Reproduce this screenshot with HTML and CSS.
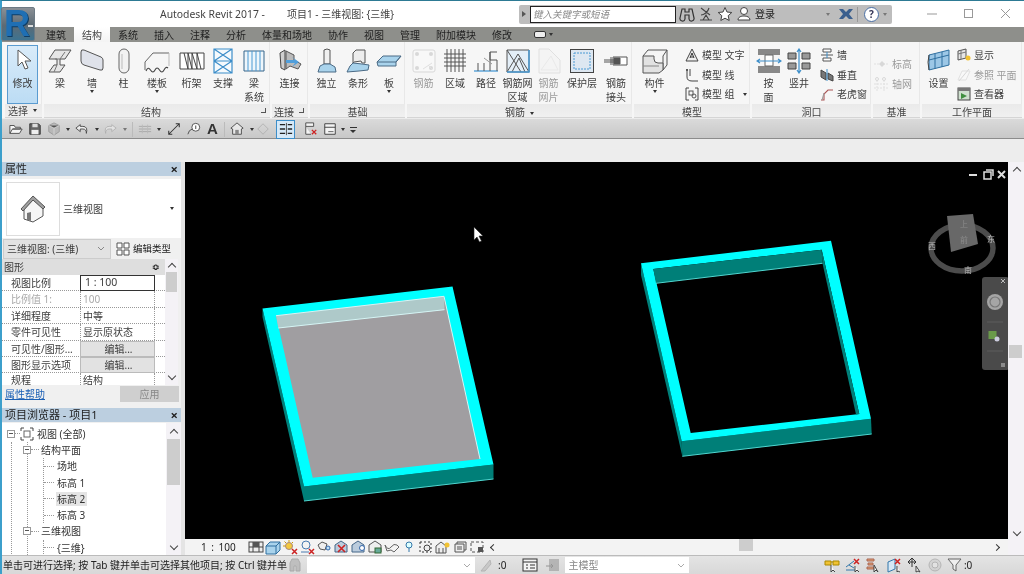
FILE: index.html
```html
<!DOCTYPE html>
<html lang="zh">
<head>
<meta charset="utf-8">
<title>Autodesk Revit 2017</title>
<link rel="stylesheet" href="styles.css">
</head>
<body>
<div class="app">
  <div class="appbtn"><span class="r">R</span><span class="appdrop"></span></div>

  <header class="titlebar">
    <span class="t1">Autodesk Revit 2017 -</span>
    <span class="t2">项目1 - 三维视图: {三维}</span>
    <div class="infobar">
      <span class="tri-r"></span>
      <div class="search">键入关键字或短语</div>
      <svg class="s16 m-a" viewBox="0 0 16 16"><path d="M3 3h3v3h4V3h3l2 9a2.500 2.500 0 0 1-5 1V9H6v4a2.500 2.500 0 0 1-5-1z" fill="none" stroke="#333" stroke-width="1.200"/></svg>
      <svg class="s16 m-b" viewBox="0 0 16 16"><path d="M3 2l9 7M3 9c3 0 7-3 8-7M2 14h12M5 14l3-5 3 5" fill="none" stroke="#444" stroke-width="1.100"/></svg>
      <svg class="s16 m-b" viewBox="0 0 16 16"><path d="M8 1.500l2 4.500 4.800.5-3.600 3.200 1 4.800L8 12.200 3.800 14.500l1-4.800L1.200 6.500 6 6z" fill="#fff" stroke="#444"/></svg>
      <svg class="s16 m-b" viewBox="0 0 16 16"><circle cx="8" cy="5" r="3.500" fill="#fff" stroke="#444"/><path d="M2 14c0-3 3-4 6-4s6 1 6 4z" fill="#fff" stroke="#444"/></svg>
      <span class="login">登录</span>
      <span class="drop m-c"></span>
      <svg class="s16 m-d" viewBox="0 0 16 16"><path d="M1 3h4l3 3 3-3h4l-4 5 4 5h-4L8 10l-3 3H1l4-5z" fill="#3a5f8e"/></svg>
      <span class="sep"></span>
      <span class="help">?</span>
      <span class="drop m-e"></span>
    </div>
    <div class="winctl">
      <span class="wc"><svg class="s12" viewBox="0 0 12 12"><path d="M1 6h10" stroke="#999"/></svg></span>
      <span class="wc"><svg class="s12" viewBox="0 0 12 12"><rect x="1.500" y="1.500" width="8" height="8" fill="none" stroke="#999"/></svg></span>
      <span class="wc"><svg class="s12" viewBox="0 0 12 12"><path d="M1 1l9 9M10 1l-9 9" stroke="#999"/></svg></span>
    </div>
  </header>

  <nav class="tabs">
    <span class="tab">建筑</span><span class="tab active">结构</span><span class="tab">系统</span><span class="tab">插入</span><span class="tab">注释</span><span class="tab">分析</span><span class="tab">体量和场地</span><span class="tab">协作</span><span class="tab">视图</span><span class="tab">管理</span><span class="tab">附加模块</span><span class="tab">修改</span>
    <span class="tabctl"><span class="tabpill"></span><span class="drop dark"></span></span>
  </nav>

  <section class="ribbon">
    <div class="panel p-sel">
      <div class="pbody">
        <div class="btn selected">
          <svg class="ico" viewBox="0 0 26 26"><path d="M8 2v16l4-4 3 7 3-1-3-7h6z" fill="#fff" stroke="#555"/></svg>
          <span class="lb">修改</span>
        </div>
      </div>
      <div class="ptitle between">选择<span class="drop dark"></span></div>
    </div>

    <div class="panel p-str">
      <div class="pbody cols c-str">
        <div class="btn"><svg class="ico" viewBox="0 0 26 26"><path d="M2 11l6-9h16l-6 9h-5v6h5l-5 7H2l5-7h3v-6z" fill="#e6e6e6" stroke="#555"/><path d="M8 11h5M13 11l5-7M10 17l-3 7" fill="none" stroke="#777"/></svg><span class="lb">梁</span></div>
        <div class="btn"><svg class="ico" viewBox="0 0 26 26"><path d="M2 4q0-3 3-2l17 7q2 1 2 3v8q0 3-3 2L5 17q-3-1-3-4z" fill="#dfe2ea" stroke="#555"/></svg><span class="lb">墙</span><span class="drop dark big"></span></div>
        <div class="btn"><svg class="ico" viewBox="0 0 26 26"><rect x="8" y="1" width="10" height="24" rx="5" fill="#f2f2f2" stroke="#666"/><path d="M11 6v15" stroke="#bbb"/></svg><span class="lb">柱</span></div>
        <div class="btn"><svg class="ico" viewBox="0 0 26 26"><path d="M1 22v-8L9 5h16" fill="none" stroke="#666"/><path d="M25 5v13" stroke="#bbb"/><path d="M2 23q2-5 4.500-1t4.500 0 4.500 0 4.500 0 4-2" fill="none" stroke="#444" stroke-width="1.100"/></svg><span class="lb">楼板</span><span class="drop dark big"></span></div>
        <div class="btn"><svg class="ico" viewBox="0 0 26 26"><path d="M1 5h24v16H1zM5 5l4 16V5l4 16V5l5 16V5l4 16" fill="#fff" stroke="#444"/></svg><span class="lb">桁架</span></div>
        <div class="btn"><svg class="ico" viewBox="0 0 26 26"><path d="M4 1h18v24H4zM4 13h18M4 1l18 12M22 1L4 13M4 13l18 12M22 13L4 25" fill="#f5fafd" stroke="#3d8ec9" stroke-width="1.200"/></svg><span class="lb">支撑</span></div>
        <div class="btn"><svg class="ico" viewBox="0 0 26 26"><path d="M3 3h20v20H3z" fill="#eef6fb" stroke="#35658a"/><path d="M7 3v20M11 3v20M15 3v20M19 3v20" stroke="#4a9ad4"/></svg><span class="lb">梁<br>系统</span></div>
      </div>
      <div class="ptitle corner">结构</div>
    </div>

    <div class="panel p-con">
      <div class="pbody">
        <div class="btn"><svg class="ico" viewBox="0 0 26 26"><path d="M3 5l5-3v20l-4-2z" fill="#cfcfcf" stroke="#444"/><path d="M9 3l8 4v5l7 4-3 5-8-3-4 3z" fill="#bbb" stroke="#555"/><path d="M9 12h9l-3-3 7 5-7 5 3-4H9z" fill="#4f9edb"/></svg><span class="lb">连接</span></div>
      </div>
      <div class="ptitle corner">连接</div>
    </div>

    <div class="panel p-fnd">
      <div class="pbody cols c-fnd">
        <div class="btn"><svg class="ico" viewBox="0 0 26 26"><path d="M10 2q3-2 6 0v14h-6z" fill="#f0f0f0" stroke="#555"/><path d="M4 24l2-6 4-2h6l5 3 1 5z" fill="#a9d3ec" stroke="#4a6a85"/></svg><span class="lb">独立</span></div>
        <div class="btn"><svg class="ico" viewBox="0 0 26 26"><path d="M8 15V5l3-3h9v13h-3l-1-2-7 1z" fill="#ededed" stroke="#555"/><path d="M2 24l3-6 3-3 9 1 7 1-1 5-9 1z" fill="#a9d3ec" stroke="#4a6a85"/></svg><span class="lb">条形</span></div>
        <div class="btn"><svg class="ico" viewBox="0 0 26 26"><path d="M1 14l6-6h18l-5 6v4H2z" fill="#a9d3ec" stroke="#4a6a85"/><path d="M1 14h19l5-6" fill="none" stroke="#4a6a85"/></svg><span class="lb">板</span><span class="drop dark big"></span></div>
      </div>
      <div class="ptitle">基础</div>
    </div>

    <div class="panel p-reb">
      <div class="pbody cols c-reb">
        <div class="btn off"><svg class="ico" viewBox="0 0 26 26"><rect x="2" y="2" width="22" height="22" rx="2" fill="#fafafa" stroke="#bbb"/><circle cx="6" cy="6" r="2" fill="#bbb"/><circle cx="20" cy="6" r="2" fill="#bbb"/><circle cx="6" cy="20" r="2" fill="#bbb"/><circle cx="20" cy="20" r="2" fill="#bbb"/><path d="M12 21l9-6M21 21l-4-4" stroke="#ccc"/></svg><span class="lb">钢筋</span></div>
        <div class="btn"><svg class="ico" viewBox="0 0 26 26"><path d="M2 6h22M2 10h22M2 14h22M2 18h22M5 1v23M9 1v23M13 1v23M17 1v23M21 1v23" stroke="#555"/></svg><span class="lb">区域</span></div>
        <div class="btn"><svg class="ico" viewBox="0 0 26 26"><path d="M1 23h24" stroke="#4a9ad4" stroke-width="1.300"/><path d="M5 23v-8M11 23v-8M17 23V4M24 4h-7v8h7v11" fill="none" stroke="#555"/><path d="M19 16l-8-6" stroke="#999"/></svg><span class="lb">路径</span></div>
        <div class="btn"><svg class="ico" viewBox="0 0 26 26"><path d="M2 2h22v22H2z" fill="#e4eff8" stroke="#555"/><path d="M2 24L13 6l11 18M7 24l7-14 6 14M2 2l14 22" fill="none" stroke="#555"/><path d="M2 24h22V2" fill="none" stroke="#4a9ad4" stroke-width="1.500"/></svg><span class="lb">钢筋网<br>区域</span></div>
        <div class="btn off"><svg class="ico" viewBox="0 0 26 26"><path d="M3 1h10l11 11v13H3z" fill="#f4f4f4" stroke="#ccc"/><path d="M5 22L15 8l7 14z" fill="none" stroke="#ddd"/></svg><span class="lb">钢筋<br>网片</span></div>
        <div class="btn"><svg class="ico" viewBox="0 0 26 26"><rect x="1.500" y="1.500" width="23" height="23" fill="#dde7f1" stroke="#444"/><rect x="5" y="5" width="16" height="16" fill="none" stroke="#4a9ad4" stroke-dasharray="2 1"/></svg><span class="lb">保护层</span></div>
        <div class="btn"><svg class="ico" viewBox="0 0 26 26"><path d="M10 9h14v8H10z" fill="#fff" stroke="#555"/><path d="M1 12h16M1 14h16M8 9v8M11 10h6v6h-6z" fill="#555" stroke="#555"/></svg><span class="lb">钢筋<br>接头</span></div>
      </div>
      <div class="ptitle">钢筋<span class="drop dark inl"></span></div>
    </div>

    <div class="panel p-mod">
      <div class="pbody cols c-mod">
        <div class="btn"><svg class="ico" viewBox="0 0 26 26"><path d="M1 8l5-6h19l-4 6v14l4-5V2" fill="#f4f4f4" stroke="#555"/><path d="M1 8h11v3q0 4 4 4h5v7l-4 3H1z" fill="#e2e2e2" stroke="#555"/><path d="M1 18h16" stroke="#888"/></svg><span class="lb">构件</span><span class="drop dark big"></span></div>
        <div class="stack wide">
          <div class="sm"><svg class="s14" viewBox="0 0 14 14"><path d="M7 1l6 12H1z" fill="#eee" stroke="#444"/><path d="M5 10l2-5 2 5M5.500 9h3" fill="none" stroke="#333"/></svg><span>模型 文字</span></div>
          <div class="sm"><svg class="s14" viewBox="0 0 14 14"><path d="M2 1v8q0 4 5 4h6M5 1v7" fill="none" stroke="#444"/><circle cx="2" cy="2" r="1" fill="#444"/></svg><span>模型 线</span></div>
          <div class="sm"><svg class="s14" viewBox="0 0 14 14"><path d="M4 1H1v12h3M10 1h3v12h-3" fill="none" stroke="#444"/><rect x="4" y="4" width="4" height="4" fill="none" stroke="#555"/><circle cx="9" cy="9" r="2" fill="none" stroke="#555"/></svg><span>模型 组</span><span class="drop dark inl"></span></div>
        </div>
      </div>
      <div class="ptitle">模型</div>
    </div>

    <div class="panel p-opn">
      <div class="pbody cols c-opn">
        <div class="btn"><svg class="ico" viewBox="0 0 26 26"><rect x="2" y="1" width="22" height="6" fill="#888"/><rect x="2" y="18" width="22" height="7" fill="#888"/><path d="M9 7h8v11H9z" fill="#fff" stroke="#666"/><path d="M1 13h24M4 11l-3 2 3 2M22 11l3 2-3 2" fill="none" stroke="#3d8ec9" stroke-width="1.200"/></svg><span class="lb">按<br>面</span></div>
        <div class="btn"><svg class="ico" viewBox="0 0 26 26"><path d="M2 5h8v6H2zM16 5h8v6h-8zM2 15h8v6H2zM16 15h8v6h-8z" fill="#999" stroke="#444"/><path d="M13 1v24M11 4l2-3 2 3M11 22l2 3 2-3" fill="none" stroke="#3d8ec9" stroke-width="1.200"/></svg><span class="lb">竖井</span></div>
        <div class="stack opn">
          <div class="sm"><svg class="s14" viewBox="0 0 14 14"><path d="M3 1h8v3H3zM3 10h8v3H3zM1 7h12" fill="#fff" stroke="#555"/><path d="M7 4v6" stroke="#3d8ec9"/></svg><span>墙</span></div>
          <div class="sm"><svg class="s14" viewBox="0 0 14 14"><path d="M1 2l5 3v7L1 9zM8 5l5 3v5l-5-2z" fill="#777" stroke="#444"/><path d="M7 1v12" stroke="#3d8ec9"/></svg><span>垂直</span></div>
          <div class="sm"><svg class="s14" viewBox="0 0 14 14"><path d="M1 13h3V7l4-4h5" fill="none" stroke="#a55" stroke-width="1.100"/><path d="M2 13L4 6" stroke="#999"/></svg><span>老虎窗</span></div>
        </div>
      </div>
      <div class="ptitle">洞口</div>
    </div>

    <div class="panel p-dat">
      <div class="pbody">
        <div class="stack mid off">
          <div class="sm"><svg class="s16" viewBox="0 0 16 14"><path d="M1 7h14" stroke="#ccc" stroke-dasharray="2 1"/><path d="M9 4l3 3-3 3-3-3z" fill="#bbb"/></svg><span>标高</span></div>
          <div class="sm"><svg class="s16" viewBox="0 0 16 14"><path d="M4 3v11M11 3v11M1 7h14M1 11h14" stroke="#ccc" stroke-dasharray="2 1"/><circle cx="4" cy="2" r="1.500" fill="none" stroke="#bbb"/><circle cx="11" cy="2" r="1.500" fill="none" stroke="#bbb"/></svg><span>轴网</span></div>
        </div>
      </div>
      <div class="ptitle">基准</div>
    </div>

    <div class="panel p-wrk">
      <div class="pbody cols c-wrk">
        <div class="btn"><svg class="ico" viewBox="0 0 26 26"><path d="M3 7l20-5v15L3 22z" fill="#9cc7e6" stroke="#2f6f9f"/><path d="M9 6v15M16 4v15M3 12l20-5" stroke="#2f6f9f"/><path d="M3 7q-2 7 0 15" fill="none" stroke="#444"/></svg><span class="lb">设置</span></div>
        <div class="stack tools">
          <div class="sm"><svg class="s14" viewBox="0 0 14 14"><path d="M1 3l8-2v9l-8 2z" fill="#e6e6e6" stroke="#555"/><path d="M4 2v9M1 6l8-2" stroke="#777"/><circle cx="11" cy="10" r="2.500" fill="#f1c232"/></svg><span>显示</span></div>
          <div class="sm off"><svg class="s14" viewBox="0 0 14 14"><path d="M1 12L5 3h8l-4 9z" fill="#fafafa" stroke="#ccc"/><path d="M2 13L12 1" stroke="#bbb"/></svg><span>参照 平面</span></div>
          <div class="sm"><svg class="s14" viewBox="0 0 14 14"><rect x="1" y="1" width="12" height="12" fill="#cfe0cf" stroke="#444"/><path d="M1 1h12v3H1z" fill="#777"/><path d="M4 6l6 3-6 3z" fill="#3f8f3f"/></svg><span>查看器</span></div>
        </div>
      </div>
      <div class="ptitle">工作平面</div>
    </div>
  </section>

  <div class="qat">
    <svg class="q" viewBox="0 0 16 16"><path d="M1 13V4h5l1 2h6v2H4l-3 5h11l3-5H4" fill="#f5f5f5" stroke="#444"/></svg>
    <svg class="q" viewBox="0 0 16 16"><path d="M2 2h10l2 2v10H2z" fill="#666" stroke="#333"/><rect x="5" y="2" width="6" height="4" fill="#ddd"/><rect x="4" y="9" width="8" height="5" fill="#eee"/></svg>
    <svg class="q faint" viewBox="0 0 16 16"><path d="M8 1l6 3v7l-6 4-6-4V4z" fill="#aaa" stroke="#777"/><path d="M2 4l6 3 6-3M8 7v8" stroke="#ddd"/></svg>
    <span class="drop dark"></span>
    <svg class="q" viewBox="0 0 16 16"><path d="M6 3L1 7l5 4V8h3q4 0 4 5 2-8-4-8H6z" fill="#eee" stroke="#444"/></svg>
    <span class="drop dark g6"></span>
    <svg class="q faint g4" viewBox="0 0 16 16"><path d="M10 3l5 4-5 4V8H7q-4 0-4 5-2-8 4-8h3z" fill="#eee" stroke="#999"/></svg>
    <span class="drop g6"></span>
    <span class="qsep"></span>
    <svg class="q faint" viewBox="0 0 16 16"><path d="M1 5h14M1 11h14M1 8h14" stroke="#888"/><path d="M5 3v10M11 3v10" stroke="#aaa"/></svg>
    <span class="drop dark"></span>
    <svg class="q g6" viewBox="0 0 16 16"><path d="M2 14L14 2M10 2h4v4M2 10v4h4" fill="none" stroke="#333" stroke-width="1.200"/></svg>
    <svg class="q g6" viewBox="0 0 16 16"><path d="M1 14q1-5 5-6" fill="none" stroke="#444"/><circle cx="10" cy="6" r="4.500" fill="#fff" stroke="#444"/><path d="M10 4v4" stroke="#333"/></svg>
    <span class="qa g6">A</span>
    <span class="qsep g3"></span>
    <svg class="q" viewBox="0 0 16 16"><path d="M8 1l7 6-2 1v6H3V8L1 7z" fill="#e8e8e8" stroke="#444"/><path d="M6 14V9h4v5" fill="#888"/></svg>
    <span class="drop dark g6"></span>
    <svg class="q faint g2" viewBox="0 0 16 16"><path d="M8 2l6 6-6 6-6-6z" fill="none" stroke="#999"/></svg>
    <span class="qactive g6"><svg class="q" viewBox="0 0 16 16"><path d="M1 3h6M1 8h6M1 13h6M10 3h5M10 8h5M10 13h5" stroke="#222" stroke-width="1.600"/><path d="M8.500 1v14" stroke="#444"/></svg></span>
    <svg class="q g9" viewBox="0 0 16 16"><path d="M2 1h9v4H2zM2 5v9h6" fill="#f4f4f4" stroke="#444"/><path d="M9 9l5 5M14 9l-5 5" stroke="#c22" stroke-width="1.500"/></svg>
    <svg class="q" viewBox="0 0 16 16"><path d="M2 2h12v12H2z" fill="#f4f4f4" stroke="#333"/><path d="M2 6h12" stroke="#333"/><path d="M6 11h6" stroke="#555"/></svg>
    <span class="drop dark g4"></span>
    <span class="qmenu"></span>
  </div>

  <div class="options"></div>

  <main class="main">
    <aside class="left">
      <div class="ptl"><span>属性</span><span class="x">×</span></div>
      <div class="typesel">
        <div class="thumb">
          <svg class="house" viewBox="0 0 28 28"><path d="M5 14v10l9 3 10-6V12L14 5z" fill="#f6f6f6" stroke="#555"/><path d="M2 14L14 1l12 11-2 2L14 5 4 16z" fill="#a0a0a0" stroke="#555"/><path d="M8 25v-7l4-1v9z" fill="#777"/></svg>
        </div>
        <span class="tname">三维视图</span>
        <span class="drop dark"></span>
      </div>
      <div class="comborow">
        <div class="combo"><span>三维视图: (三维)</span><svg class="chev" viewBox="0 0 8 5"><path d="M1 1l3 3 3-3" fill="none" stroke="#888"/></svg></div>
        <div class="edittype"><svg class="s14" viewBox="0 0 14 14"><path d="M1 1h5v5H1zM8 1h5v5H8zM1 8h5v5H1zM8 8h5v5H8z" fill="#fff" stroke="#555"/></svg><span>编辑类型</span></div>
      </div>
      <div class="propwrap">
        <div class="props">
          <div class="phead"><span>图形</span><span class="collapse">≎</span></div>
          <div class="rows">
            <div class="pr"><span>视图比例</span><span class="val boxed">1 : 100</span></div>
            <div class="pr dim"><span>比例值 1:</span><span class="val">100</span></div>
            <div class="pr"><span>详细程度</span><span class="val">中等</span></div>
            <div class="pr"><span>零件可见性</span><span class="val">显示原状态</span></div>
            <div class="pr"><span>可见性/图形...</span><span class="val ebtn">编辑...</span></div>
            <div class="pr"><span>图形显示选项</span><span class="val ebtn">编辑...</span></div>
            <div class="pr last"><span>规程</span><span class="val">结构</span></div>
          </div>
        </div>
        <div class="sb sb-props"><span class="up"></span><span class="thumbbar"></span><span class="dn"></span></div>
      </div>
      <div class="pfoot"><a class="helplink">属性帮助</a><span class="apply">应用</span></div>

      <div class="ptl second"><span>项目浏览器 - 项目1</span><span class="x">×</span></div>
      <div class="browser">
        <div class="tree">
          <div class="row"><span class="tg"></span><span class="dash d1"></span><svg class="s14" viewBox="0 0 14 14"><path d="M1 4V1h3M10 1h3v3M13 10v3h-3M4 13H1v-3" fill="none" stroke="#444"/><rect x="4" y="4" width="6" height="6" fill="none" stroke="#666"/></svg><span class="tx first">视图 (全部)</span></div>
          <ul class="l1">
            <li>
              <div class="row"><span class="pad"></span><span class="tg"></span><span class="dash d2"></span><span class="tx lv1">结构平面</span></div>
              <ul class="l2">
                <li class="row"><span class="dash d3"></span><span class="tx">场地</span></li>
                <li class="row"><span class="dash d3"></span><span class="tx">标高 1</span></li>
                <li class="row"><span class="dash d3"></span><span class="tx hl">标高 2</span></li>
                <li class="row"><span class="dash d3"></span><span class="tx">标高 3</span></li>
              </ul>
            </li>
            <li>
              <div class="row"><span class="pad"></span><span class="tg"></span><span class="dash d2"></span><span class="tx lv1">三维视图</span></div>
              <ul class="l2">
                <li class="row"><span class="dash d3"></span><span class="tx">{三维}</span></li>
              </ul>
            </li>
          </ul>
        </div>
        <div class="sb sb-tree"><span class="up"></span><span class="thumbbar"></span><span class="dn"></span></div>
      </div>
    </aside>

    <div class="viewcol">
      <div class="canvas">
        <svg class="scene" viewBox="185 163 823 377">
          <!-- left slab -->
          <polygon points="262.500,309.500 304,487.500 304,502 262.500,318" fill="#00807a"/>
          <polygon points="304,487.500 493.500,465.500 493.500,480 304,502" fill="#007f78"/>
          <path d="M304 502L493.500 480" stroke="#4fd6d0"/>
          <polygon points="262.500,309.500 452.500,287.500 493.500,465.500 304,487.500" fill="#00ffff"/>
          <polygon points="276,316.700 444,297.300 480,460 312.700,478.700" fill="#a09ea1"/>
          <polygon points="276,316.700 444,297.300 444.500,310.700 278.300,329" fill="#aec9c9"/>
          <path d="M276 316.700L444 297.300M278.300 329L444.500 310.700M444 297.300L480 460" stroke="#d5f5f5" stroke-width="1" fill="none"/>
          <!-- right ring -->
          <polygon points="641,264.300 681.700,442.300 682.300,457.300 641,276" fill="#00807a"/>
          <polygon points="681.700,442.300 871,419.700 871.700,435 682.300,457.300" fill="#007f78"/>
          <path d="M682.300 457.300L871.700 435" stroke="#4fd6d0"/>
          <path fill-rule="evenodd" d="M641 264.300L831 241.700L871 419.700L681.700 442.300ZM653.300 270L690.700 434L859.300 415L821.700 250.700Z" fill="#00ffff"/>
          <polygon points="653.300,270 821.700,250.700 822.500,264.300 656,284.300" fill="#007f78"/>
          <polygon points="821.700,250.700 859.300,415 856,415.500 822.500,264.300" fill="#00807a"/>
          <path d="M656 284.300L822.500 264.300" stroke="#4fd6d0"/>
          <!-- cursor -->
          <path d="M474 228v13l3-3 2.500 5 2-1-2.500-5h4z" fill="#fff" stroke="#222" stroke-width=".6"/>
          <!-- view cube -->
          <ellipse cx="962" cy="249" rx="31" ry="23" fill="none" stroke="#4c4c4c" stroke-width="5.500"/>
          <polygon points="947,217 973,215 978,245 951,253" fill="#686868"/>
          <text class="cubetx dimtx" x="964" y="228">上</text>
          <text class="cubetx dimtx" x="964" y="244">前</text>
          <text class="cubetx" x="932" y="250">西</text>
          <text class="cubetx" x="991" y="243">东</text>
          <text class="cubetx" x="968" y="274">南</text>
          <!-- window controls -->
          <path d="M969 176h8" stroke="#ddd" stroke-width="2"/>
          <path d="M984 173h7v7h-7z M986 171h7v6" fill="none" stroke="#ddd" stroke-width="1.500"/>
          <path d="M998 172l7 7M1005 172l-7 7" stroke="#ddd" stroke-width="2"/>
          <!-- nav bar -->
          <rect x="982" y="278" width="27" height="93" rx="3" fill="#4a4a4a"/>
          <path d="M1001 280l4 4M1005 280l-4 4" stroke="#bbb"/>
          <circle cx="995" cy="303" r="8" fill="#a5a5a5"/>
          <circle cx="995" cy="303" r="5" fill="none" stroke="#777" stroke-width="1.200"/>
          <path d="M987 323h16M987 352h16" stroke="#5c5c5c"/>
          <rect x="988.500" y="332" width="8" height="8" fill="#6a9a4a"/>
          <circle cx="997" cy="340" r="2.500" fill="#ccd"/>
          <path d="M1001 365h4M1001 367h4" stroke="#ccc"/>
        </svg>
      </div>
      <div class="viewbar">
        <span class="scale">1 : 100</span>
        <div class="vbicons">
          <svg class="s16" viewBox="0 0 16 16"><rect x="1" y="3" width="14" height="10" fill="#eee" stroke="#444"/><path d="M1 8h14M5 3v10M11 3v10" stroke="#444"/><rect x="5" y="3" width="6" height="5" fill="#555"/></svg>
          <svg class="s16" viewBox="0 0 16 16"><path d="M1 7l4-4h10v8l-4 4H1z" fill="#a9d3ec" stroke="#2f6f9f"/><path d="M1 7h10l4-4M11 7v8" fill="none" stroke="#2f6f9f"/></svg>
          <svg class="s16" viewBox="0 0 16 16"><circle cx="7" cy="7" r="3.500" fill="#f3c93f" stroke="#a87"/><path d="M7 1v2M1 7h2M2.500 2.500l1.500 1.500M11 3l-1 1" stroke="#c90"/><path d="M10 10l5 5M15 10l-5 5" stroke="#c22" stroke-width="1.500"/></svg>
          <svg class="s16" viewBox="0 0 16 16"><circle cx="7" cy="6" r="4" fill="none" stroke="#4a7ab0"/><path d="M2 13h8" stroke="#4a7ab0"/><path d="M10 10l5 5M15 10l-5 5" stroke="#c22" stroke-width="1.500"/></svg>
          <svg class="s16" viewBox="0 0 16 16"><path d="M2 6l4-3 5 2-2 6-5-1z" fill="#eee" stroke="#555"/><circle cx="12" cy="9" r="2" fill="#bfe0f4" stroke="#36a"/></svg>
          <svg class="s16" viewBox="0 0 16 16"><path d="M2 13V6l6-4 6 4v7z" fill="#bcd" stroke="#468"/><path d="M5 6l7 7M12 6l-7 7" stroke="#c22" stroke-width="1.600"/></svg>
          <svg class="s16" viewBox="0 0 16 16"><path d="M2 13V6l6-4 6 4v7z" fill="#bcd" stroke="#468"/><circle cx="12" cy="9" r="2.500" fill="#fff" stroke="#36a"/></svg>
          <svg class="s16" viewBox="0 0 16 16"><path d="M2 13V6l6-4 6 4v7z" fill="#eee" stroke="#555"/><rect x="8" y="9" width="6" height="5" fill="#6a9" stroke="#363"/></svg>
          <svg class="s16" viewBox="0 0 16 16"><path d="M1 6q3 6 6 2t6-2l2 2-5 5-3-2-4 1z" fill="none" stroke="#666"/></svg>
          <svg class="s16" viewBox="0 0 16 16"><circle cx="8" cy="6" r="3" fill="#dff" stroke="#37a"/><path d="M8 9v4" stroke="#37a"/></svg>
          <svg class="s16" viewBox="0 0 16 16"><path d="M2 3h11v10H2z" fill="none" stroke="#333" stroke-dasharray="2 2"/><circle cx="9" cy="9" r="3" fill="#eee" stroke="#444"/></svg>
          <svg class="s16" viewBox="0 0 16 16"><path d="M1 14V7l5-4 5 4v7zM4 14V9M8 14V9" fill="#eee" stroke="#555"/><circle cx="12" cy="6" r="2.500" fill="#f1c232"/></svg>
          <svg class="s16" viewBox="0 0 16 16"><path d="M3 5h9v8H3zM5 5V3h9v8h-2" fill="#eee" stroke="#555"/><path d="M5 8h5M5 10h5" stroke="#555"/></svg>
          <svg class="s16" viewBox="0 0 16 16"><rect x="2" y="3" width="12" height="10" fill="none" stroke="#555" stroke-dasharray="3 2"/><rect x="9" y="8" width="5" height="5" fill="#555"/></svg>
          <span class="leftarr"></span>
        </div>
        <div class="htrack"><span class="hthumb"></span><span class="rightarr"></span></div>
      </div>
    </div>

    <div class="sb sb-view"><span class="up"></span><span class="thumbbar"></span><span class="dn"></span></div>
  </main>

  <footer class="status">
    <span class="stext">单击可进行选择; 按 Tab 键并单击可选择其他项目; 按 Ctrl 键并单</span>
    <svg class="s16 faint st-ic" viewBox="0 0 16 16"><path d="M5 2h6l2 4v8H9V9H7v5H3V6z" fill="#aaa" stroke="#888"/></svg>
    <div class="sinput s1"><svg class="chev" viewBox="0 0 8 5"><path d="M1 1l3 3 3-3" fill="none" stroke="#aaa"/></svg></div>
    <svg class="s14 faint mst" viewBox="0 0 14 14"><path d="M2 13L11 2l1 4-6 7z" fill="#bbb" stroke="#999"/></svg>
    <span class="cnt">:0</span>
    <svg class="s16 ws" viewBox="0 0 16 16"><rect x="1" y="2" width="14" height="12" fill="#f4f4f4" stroke="#333"/><path d="M1 5h14M4 8h2M8 8h5M4 11h2M8 11h5" stroke="#333"/></svg>
    <svg class="s14 faint dsg" viewBox="0 0 14 14"><rect x="3" y="1" width="10" height="12" fill="#999"/><path d="M0 8h7M5 6l2 2-2 2" stroke="#666" fill="none"/></svg>
    <div class="sinput s2"><span>主模型</span><svg class="chev" viewBox="0 0 8 5"><path d="M1 1l3 3 3-3" fill="none" stroke="#aaa"/></svg></div>
    <div class="sright">
      <svg class="s16" viewBox="0 0 16 16"><path d="M1 4h6v4H1zM9 4h6v4H9zM7 5h2" fill="#f1c232" stroke="#a80"/><path d="M7 8v7l2-2 2 2" fill="#fff" stroke="#444"/></svg>
      <svg class="s16" viewBox="0 0 16 16"><path d="M1 10l8-6M1 13h9M4 8l5 3" stroke="#37a" fill="none"/><path d="M9 2l5 5M14 2L9 7" stroke="#c22" stroke-width="1.500"/><path d="M10 9v6l2-2 2 2" fill="#fff" stroke="#444"/></svg>
      <svg class="s16" viewBox="0 0 16 16"><path d="M2 2h7v2H2zM3 6h5v2H3zM2 10h7v2H2z" fill="#e0a070" stroke="#a65"/><path d="M9 8v7l2-2 2 2z" fill="#fff" stroke="#444"/></svg>
      <svg class="s16" viewBox="0 0 16 16"><path d="M2 5l7-3v10l-7 3z" fill="#d6e8f6" stroke="#37a"/><path d="M9 2l5 5M14 2L9 7" stroke="#c22" stroke-width="1.500"/><path d="M11 9v6l1-1 2 1" fill="#fff" stroke="#444"/></svg>
      <svg class="s16" viewBox="0 0 16 16"><path d="M6 1v9M2 5h8M4 3l2-2 2 2M4 7l-2-2 2-2M8 3l2 2-2 2" fill="none" stroke="#333"/><path d="M10 9v6l2-1 2 1z" fill="#fff" stroke="#444"/></svg>
      <svg class="s16 faint" viewBox="0 0 16 16"><circle cx="8" cy="8" r="6" fill="#ccc" stroke="#999"/><circle cx="8" cy="8" r="3" fill="#e6e6e6" stroke="#999"/></svg>
      <svg class="s16" viewBox="0 0 16 16"><path d="M1 2h13L9 8v6l-3-2V8z" fill="#eee" stroke="#666"/></svg>
      <span class="cnt tight">:0</span>
    </div>
  </footer>
</div>
</body>
</html>
```
FILE: styles.css
```css
* { box-sizing: border-box; margin: 0; padding: 0; }
html, body { width: 1024px; height: 574px; overflow: hidden; background: #fff; }
body { font: 10px/14px "Noto Sans", "Noto Sans CJK SC", sans-serif; color: #3c3c3c; }
ul { list-style: none; }
svg { display: block; flex: none; }

.app {
  position: relative; width: 1024px; height: 574px; display: flex; flex-direction: column;
  border-left: 2px solid #3c9fcb; border-top: 1px solid #2d7a94; background: #ececec;
  filter: blur(.4px);
}

.s12 { width: 12px; height: 12px; }
.s14 { width: 14px; height: 14px; }
.s16 { width: 16px; height: 16px; }
.faint { opacity: .6; }
.off { opacity: .5; }

.drop { display: inline-block; width: 0; height: 0; border: 2.5px solid transparent; border-top: 3px solid #777; border-bottom: 0; flex: none; }
.drop.dark { border-top-color: #333; }
.drop.big { display: block; margin: 0 auto; }
.drop.inl { margin-left: 5px; vertical-align: middle; }

/* application button */
.appbtn {
  position: absolute; left: -1px; top: 6px; width: 34px; height: 34px; border: 1px solid #6d7a84; border-radius: 2px;
  background: linear-gradient(#8a9096, #5c6a74 55%, #3d7391); display: flex; align-items: center; padding-left: 2px; z-index: 2;
}
.r { font: bold 36px/34px "Liberation Sans", sans-serif; color: #1f6fb4; text-shadow: 1px 1px 0 #0d3d66; }
.appdrop { width: 5px; height: 2px; background: #ddd; margin-left: -2px; margin-top: 4px; }

/* title */
.titlebar { height: 26px; background: #fff; display: flex; align-items: center; padding-left: 158px; }
.t1 { width: 127px; font-size: 10.4px; color: #444; white-space: nowrap; }
.t2 { width: 232px; font-size: 10px; color: #444; white-space: nowrap; }
.infobar { width: 373px; height: 19px; background: #bdbdbd; border-radius: 2px; display: flex; align-items: center; padding-left: 3px; flex: none; }
.tri-r { width: 0; height: 0; border: 3px solid transparent; border-left: 4px solid #555; border-right: 0; flex: none; }
.search { width: 146px; height: 17px; margin-left: 4px; background: #fff; border: 1px solid #222; font-style: italic; color: #888; font-size: 9.5px; line-height: 15px; padding-left: 2px; flex: none; }
.m-a { margin-left: 3px; }
.m-b { margin-left: 3px; }
.login { margin-left: 3px; width: 22px; color: #222; flex: none; }
.m-c { margin-left: 49px; }
.m-d { margin-left: 8px; }
.sep { width: 1px; height: 15px; background: #999; margin-left: 3px; flex: none; }
.help { width: 15px; height: 15px; border: 1.5px solid #4a6fa5; border-radius: 50%; background: #fff; color: #335; font-weight: bold; font-size: 10px; line-height: 12px; text-align: center; margin-left: 6px; flex: none; }
.m-e { margin-left: 4px; }
.winctl { display: flex; margin-left: 21px; }
.wc { width: 37px; display: flex; justify-content: center; }

/* tabs */
.tabs { height: 15px; background: #8e8f8b; display: flex; padding-left: 36px; line-height: 16px; color: #222; }
.tab { padding: 0 8px; white-space: nowrap; }
.tab.active { background: linear-gradient(#fff, #f3f3f3); color: #444; }
.tabctl { margin-left: 14px; display: flex; align-items: center; gap: 3px; }
.tabpill { width: 12px; height: 7px; background: #eee; border: 1px solid #333; border-radius: 2px; }

/* ribbon */
.ribbon { height: 76px; background: #f6f6f6; display: flex; gap: 2px; padding-left: 3px; flex: none; }
.panel { display: flex; flex-direction: column; flex: none; }
.p-sel { width: 37px; } .p-str { width: 226px; } .p-con { width: 36px; } .p-fnd { width: 95px; }
.p-reb { width: 225px; } .p-mod { width: 116px; } .p-opn { width: 119px; } .p-dat { width: 47px; } .p-wrk { width: 100px; }
.pbody { height: 62px; padding-top: 4px; border-right: 1px solid #e8e8e8; }
.cols { display: grid; }
.c-str { grid-template-columns: 32px 32px 31px 36px 33px 30px 32px; }
.c-fnd { grid-template-columns: 33px 30px 32px; }
.c-reb { grid-template-columns: 33px 30px 32px 31px 31px 36px 32px; }
.c-mod { grid-template-columns: 41px 75px; }
.c-opn { grid-template-columns: 33px 28px 58px; }
.c-wrk { grid-template-columns: 33px 67px; }
.btn { display: flex; flex-direction: column; align-items: center; text-align: center; }
.btn.selected { margin: -1px 0 0 2px; width: 31px; height: 59px; background: linear-gradient(#d9ebf9, #bcdcf4); border: 1px solid #5a9bd0; }
.ico { width: 26px; height: 26px; margin: 2px 0; }
.lb { line-height: 14px; white-space: nowrap; }
.ptitle { height: 14px; line-height: 16px; text-align: center; background: linear-gradient(#eaeaea, #f0f0f0); border-bottom: 1px solid #d5d5d5; color: #444; position: relative; }
.between { display: flex; justify-content: space-between; align-items: center; padding: 0 5px 0 3px; }
.corner { padding-right: 12px; }
.corner::after { content: ""; position: absolute; right: 4px; bottom: 4px; width: 4px; height: 4px; border-right: 1px solid #555; border-bottom: 1px solid #555; }
.stack { display: flex; flex-direction: column; gap: 5.5px; padding-top: 2px; }
.stack.mid { padding-top: 11px; }
.stack.wide { padding-left: 10px; }
.stack.opn { padding-left: 7px; }
.stack.tools { padding-left: 2px; }
.sm { display: flex; align-items: center; gap: 3px; white-space: nowrap; height: 14px; }

/* quick access */
.qat { height: 20px; margin-top: 1px; padding: 1px 0 0 2px; background: linear-gradient(#dadada, #c8c8c8); border-bottom: 1px solid #8c8c8c; display: flex; align-items: center; flex: none; }
.qat > * { margin-left: 5px; flex: none; }
.qat > .g2 { margin-left: 2px; }
.qat > .g3 { margin-left: 3px; }
.qat > .g4 { margin-left: 4px; }
.qat > .g6 { margin-left: 6px; }
.qat > .g9 { margin-left: 9px; }
.q { width: 14px; height: 14px; }
.qsep { width: 1px; height: 15px; background: #bbb; }
.qa { font: bold 15px/16px "Liberation Sans", sans-serif; color: #333; width: 14px; }
.qactive { width: 19px; height: 19px; background: #d6e9f8; border: 1px solid #3d8ec9; display: flex; align-items: center; justify-content: center; }
.qmenu { width: 7px; height: 5px; border-top: 1px solid #333; position: relative; }
.qmenu::after { content: ""; position: absolute; left: 0; top: 2px; border: 3.500px solid transparent; border-top: 3px solid #333; border-bottom: 0; }

.options { height: 23px; background: #ededed; flex: none; }

/* main */
.main { height: 393px; display: flex; flex: none; background: #e4e4e4; }
.left { width: 179px; background: #f0f0f0; display: flex; flex-direction: column; flex: none; margin-right: 4px; }
.ptl { height: 14px; background: #bccfe0; display: flex; justify-content: space-between; align-items: center; padding: 0 3px; font-size: 11px; color: #222; flex: none; }
.ptl.second { margin-top: 5px; }
.x { font-weight: bold; font-size: 13px; color: #222; }
.typesel { height: 59px; margin-top: 3px; background: #fff; display: flex; align-items: center; padding-left: 4px; flex: none; }
.thumb { width: 54px; height: 54px; border: 1px solid #ddd; display: flex; align-items: center; justify-content: center; }
.house { width: 28px; height: 30px; }
.tname { margin-left: 3px; width: 107px; }
.comborow { height: 21px; display: flex; align-items: center; padding-left: 1px; flex: none; }
.combo { width: 108px; height: 20px; background: #e2e2e2; border: 1px solid #ccc; display: flex; align-items: center; justify-content: space-between; padding: 0 5px 0 3px; white-space: nowrap; }
.chev { width: 8px; height: 5px; }
.edittype { display: flex; align-items: center; gap: 3px; margin-left: 5px; color: #222; white-space: nowrap; font-size: 9.5px; }
.propwrap { height: 126px; display: flex; flex: none; }
.props { width: 163px; flex: none; background: #fff; }
.phead { height: 16px; background: #dedede; display: flex; justify-content: space-between; align-items: center; padding: 0 5px 0 2px; }
.collapse { font-size: 9px; font-weight: bold; color: #222; }
.rows { display: grid; grid-auto-rows: 16.4px; height: 110px; }
.pr { display: grid; grid-template-columns: 69px 75px; align-items: center; border-bottom: 1px dotted #999; padding-left: 9px; white-space: nowrap; }
.pr.dim { color: #aaa; }
.pr.last { align-items: start; border-bottom: 0; }
.pr.last .val { height: 12px; line-height: 14px; }
.val { height: 16px; line-height: 16px; padding-left: 2px; border-left: 1px dotted #999; border-right: 1px dotted #999; }
.boxed { border: 1.500px solid #333; line-height: 13px; padding-left: 4px; background: #fff; font-size: 10.5px; }
.ebtn { background: #e2e2e2; border: 1px solid #bbb; text-align: center; line-height: 14px; }

.sb { background: #f4f2f6; display: flex; flex-direction: column; align-items: stretch; flex: none; }
.up, .dn { display: block; height: 10px; position: relative; flex: none; }
.up::after, .dn::after { content: ""; position: absolute; left: 50%; top: 3px; width: 5px; height: 5px; margin-left: -2.500px; border-left: 1.500px solid #444; border-top: 1.500px solid #444; transform: rotate(45deg); }
.dn::after { transform: rotate(225deg); top: 0; }
.thumbbar { display: block; background: #cdcdcd; }
.sb-props { width: 13px; padding-top: 2px; }
.sb-props .thumbbar { height: 20px; margin: 1px 1px 0; }
.sb-props .dn { margin-top: auto; margin-bottom: 2px; }
.sb-tree { width: 15px; padding-top: 4px; margin-left: auto; }
.sb-tree .thumbbar { height: 46px; margin: 2px 1px 0; }
.sb-tree .dn { margin-top: auto; margin-bottom: 2px; }
.sb-view { width: 16px; padding-top: 3px; }
.sb-view .thumbbar { height: 13px; margin: 170px 2px 0 1px; }
.sb-view .dn { margin-top: 171px; }

.pfoot { height: 18px; display: flex; justify-content: space-between; align-items: center; padding: 0 2px 0 3px; flex: none; }
.helplink { color: #1a5fb4; text-decoration: underline; }
.apply { width: 59px; height: 16px; background: #cfcfcf; color: #888; text-align: center; line-height: 16px; }

.browser { height: 132px; margin-top: 1px; background: #fff; display: flex; flex: none; overflow: hidden; }
.tree { flex: 1; padding: 2.500px 0 0 5px; }
.row { height: 16.300px; display: flex; align-items: center; white-space: nowrap; }
.tg { width: 8px; height: 8px; border: 1px solid #999; position: relative; flex: none; background: #fff; }
.tg::after { content: ""; position: absolute; left: 1px; top: 2px; width: 4px; height: 1px; background: #555; }
.dash { border-top: 1px dotted #999; flex: none; height: 0; }
.d1 { width: 5px; }
.d2 { width: 8px; }
.d3 { width: 10px; }
.tx { margin-left: 2px; color: #333; padding: 0 2px 0 1px; }
.tx.first { margin-left: 2px; }
.tx.lv1 { margin-left: 1px; }
.tx.hl { background: #e4e4e4; }
.pad { width: 11px; flex: none; }
.l1 { margin-left: 4px; border-left: 1px dotted #999; background: repeating-linear-gradient(#999 0 1px, transparent 1px 2px) 15px 0 / 1px 100% no-repeat; }
.l2 { margin-left: 31px; border-left: 1px dotted #999; }

.viewcol { width: 823px; display: flex; flex-direction: column; flex: none; }
.canvas { flex: 1; background: #000; min-height: 0; }
.scene { width: 823px; height: 377px; }
.cubetx { font-size: 8px; fill: #bbb; text-anchor: middle; }
.dimtx { fill: #8c8c8c; }
.viewbar { height: 16px; background: #f3f3f3; display: flex; align-items: center; flex: none; }
.scale { width: 63px; padding-left: 16px; color: #222; white-space: pre; word-spacing: 2px; }
.vbicons { display: flex; gap: 1px; align-items: center; }
.leftarr, .rightarr { width: 5px; height: 5px; border-left: 1.500px solid #333; border-top: 1.500px solid #333; transform: rotate(-45deg); margin-left: 5px; flex: none; }
.rightarr { transform: rotate(135deg); margin-left: 241px; }
.htrack { flex: 1; display: flex; align-items: center; height: 16px; }
.hthumb { width: 14px; height: 12px; background: #cdcdcd; margin: 0 0 4px 243px; flex: none; }

/* status */
.status { height: 18px; background: linear-gradient(#e4e4e4, #d8d8d8); display: flex; align-items: center; flex: 1; border-top: 1px solid #bbb; }
.stext { width: 283px; padding-left: 1px; white-space: nowrap; color: #222; flex: none; }
.st-ic { margin-left: 2px; }
.sinput { height: 16px; background: #fff; display: flex; align-items: center; justify-content: space-between; padding: 0 4px 0 3px; color: #888; flex: none; }
.s1 { width: 168px; margin-left: 4px; justify-content: flex-end; }
.s2 { width: 124px; margin-left: 5px; }
.mst { margin-left: 4px; }
.cnt { margin-left: 5px; color: #222; }
.tight { margin-left: -4px; }
.ws { margin-left: 16px; }
.dsg { margin-left: 8px; }
.sright { display: flex; gap: 4.5px; align-items: center; margin-left: 135px; }
```
